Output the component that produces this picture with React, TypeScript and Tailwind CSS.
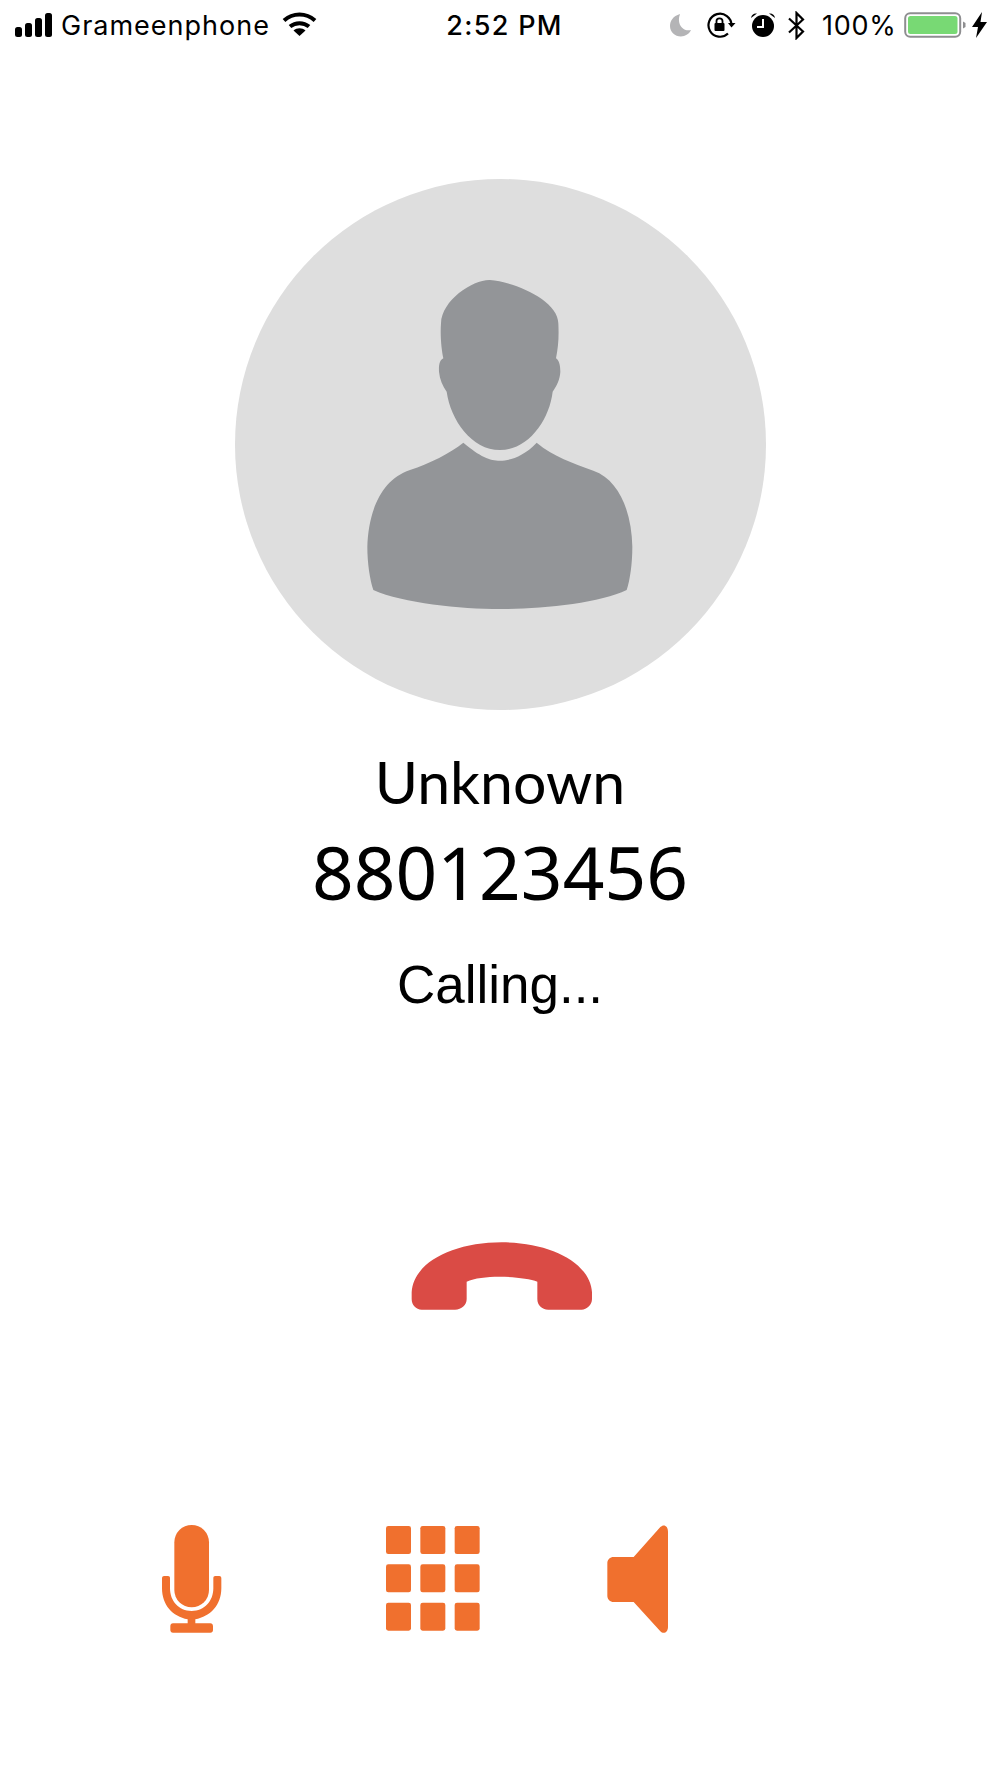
const O = "#F0702E";

function StatusBar() {
  return (
    <div className="flex h-[50px] items-center text-black font-['Inter',sans-serif]">
      <div className="flex w-[340px] items-center pl-[15px]">
        <svg width="38" height="24" viewBox="0 0 38 24" fill="#000">
          <rect x="0" y="14" width="7" height="10" rx="2.5" />
          <rect x="10" y="10" width="7" height="14" rx="2.5" />
          <rect x="20" y="5" width="7" height="19" rx="2.5" />
          <rect x="30" y="0" width="7" height="24" rx="2.5" />
        </svg>
        <span className="ml-[8px] text-[27px] leading-none tracking-[1px]">Grameenphone</span>
        <svg className="ml-[12px] -mt-[3px]" width="35" height="24" viewBox="0 0 35 24" fill="none" stroke="#000" strokeWidth="4">
          <path d="M2 8.5C11 0.5 24 0.5 33 8.5" />
          <path d="M8 14.5C13.500 10 21.500 10 27 14.500" />
          <path d="M17.500 24L11.500 18.500C15 15.500 20 15.500 23.500 18.500Z" fill="#000" stroke="none" />
        </svg>
      </div>
      <div className="w-[329px] text-center text-[27px] leading-none font-medium tracking-[1.3px]">2:52 PM</div>
      <div className="flex flex-1 items-center">
        <svg width="23" height="24" viewBox="0 0 23 24">
          <path d="M11 1C4 3 1 8 1 13C1 20 8 25 15 23C18 22 21 20 22 17C15 19 7 12 11 1Z" fill="#B4B4B6" />
        </svg>
        <svg className="ml-[15px]" width="29" height="26" viewBox="0 0 29 26" fill="none" stroke="#000" strokeWidth="2.200">
          <path d="M21 21.500A11.500 11.500 0 1 1 24.500 13" />
          <path d="M21 11L24.500 15.500L28.500 11Z" fill="#000" stroke="none" />
          <rect x="7.500" y="11" width="10" height="8" rx="1" fill="#000" stroke="none" />
          <path d="M9.500 11V9C9.500 5.500 15.500 5.500 15.500 9V11" strokeWidth="1.800" />
        </svg>
        <svg className="ml-[14px]" width="26" height="26" viewBox="0 0 26 26">
          <circle cx="13" cy="14" r="11" fill="#000" />
          <path d="M1 6C1.500 2.500 4 1 7 1.500Z" fill="#000" />
          <path d="M25 6C24.500 2.500 22 1 19 1.500Z" fill="#000" />
          <path d="M13 7V15H7" fill="none" stroke="#fff" strokeWidth="2" />
        </svg>
        <svg className="ml-[12px]" width="17" height="29" viewBox="0 0 17 29" fill="none" stroke="#000" strokeWidth="2.200">
          <path d="M1 7.500L15 20.500L8.500 27V2L15 8.500L1 21.500" />
        </svg>
        <span className="ml-[17px] text-[27px] leading-none tracking-[0.7px]">100%</span>
        <svg className="ml-[8px]" width="62" height="26" viewBox="0 0 62 26">
          <rect x="1.200" y="1.200" width="55" height="23.600" rx="5" fill="none" stroke="#8E8E90" strokeWidth="2" />
          <rect x="4" y="4" width="49.500" height="18" rx="2.500" fill="#78D974" />
          <path d="M59 9.500L61.500 11V15L59 16.500Z" fill="#8E8E90" />
        </svg>
        <svg className="ml-[6px]" width="15" height="26" viewBox="0 0 15 26" fill="#000">
          <path d="M10 0L0 15H6L4 26L15 10H8.500Z" />
        </svg>
      </div>
    </div>
  );
}

function Person() {
  return (
    <svg width="320" height="360" viewBox="0 0 960 1080" fill="#939598">
      <path d="M450 60C400 58 305 120 303 190C300 230 305 270 310 295C300 300 296 312 297 335C299 358 308 378 320 395C332 480 395 570 480 570C565 570 628 480 638 395C650 378 660 358 661 335C661 312 656 300 648 295C655 260 657 230 655 190C655 120 520 65 450 60Z" />
      <path d="M370 548C420 590 450 602 480 602C510 602 550 590 590 548C640 590 700 610 760 632C840 660 875 760 877 860C877 910 870 960 860 990C780 1030 600 1047 480 1047C360 1047 190 1030 100 990C90 960 82 910 82 860C85 760 120 660 210 630C270 610 330 580 370 548Z" />
    </svg>
  );
}

function HangUp() {
  return (
    <svg width="220" height="130" viewBox="0 0 660 390" fill="#DA4B45">
      <path d="M65 220C70 130 190 70 335 70C480 70 600 130 606 220V240C606 258 590 272 575 272H475C455 272 442 258 442 240V188C400 172 280 165 230 188V240C230 258 215 272 195 272H95C78 272 65 258 65 240Z" />
    </svg>
  );
}

function Mic() {
  return (
    <svg width="62" height="110" viewBox="0 0 186 330" fill={O}>
      <rect x="37" y="0" width="104" height="247" rx="52" />
      <path d="M0 160C0 155 3 153 6 153H18C22 153 24 155 24 160V190C24 228 50 258 89 258C128 258 154 228 154 190V160C154 155 156 153 160 153H172C175 153 178 155 178 160V190C178 240 145 275 100 283V295H145C150 295 153 299 153 304V315C153 320 150 323 145 323H33C28 323 25 320 25 315V304C25 299 28 295 33 295H77V283C32 275 0 240 0 190Z" />
    </svg>
  );
}

function Keypad() {
  const xs = [0, 103, 206];
  const ys = [0, 115, 230];
  return (
    <svg width="94" height="105" viewBox="0 0 282 315" fill={O}>
      {ys.map((y) =>
        xs.map((x) => <rect key={`${x}-${y}`} x={x} y={y} width="75" height="84" rx="7" />),
      )}
    </svg>
  );
}

function Speaker() {
  return (
    <svg width="61" height="109" viewBox="0 0 183 327" fill={O}>
      <path d="M1 115C1 104 9 96 20 96H80L160 6C170 -4 183 2 183 20V305C183 322 170 329 160 319L80 231H20C9 231 1 223 1 212Z" />
    </svg>
  );
}

export default function App() {
  return (
    <div className="flex h-[1778px] w-[1000px] flex-col bg-white text-black">
      <StatusBar />
      <div className="mt-[129px] flex h-[531px] w-[531px] items-center justify-center self-center rounded-full bg-[#DEDEDE]">
        <div className="mb-[9px]">
          <Person />
        </div>
      </div>
      <div className="mt-[36px] text-center text-[59px] leading-[72px] font-['Lato',sans-serif]">Unknown</div>
      <div className="mt-[10px] text-center text-[73px] leading-[88px] font-['Noto_Sans',sans-serif]">880123456</div>
      <div className="mt-[39px] text-center text-[53px] leading-[60px] font-['Liberation_Sans',sans-serif]">Calling...</div>
      <div className="mt-[204px] flex justify-center">
        <HangUp />
      </div>
      <div className="mt-[176px] flex items-start pl-[162px]">
        <Mic />
        <div className="ml-[162px] mt-[1px]">
          <Keypad />
        </div>
        <div className="ml-[127px]">
          <Speaker />
        </div>
      </div>
    </div>
  );
}
